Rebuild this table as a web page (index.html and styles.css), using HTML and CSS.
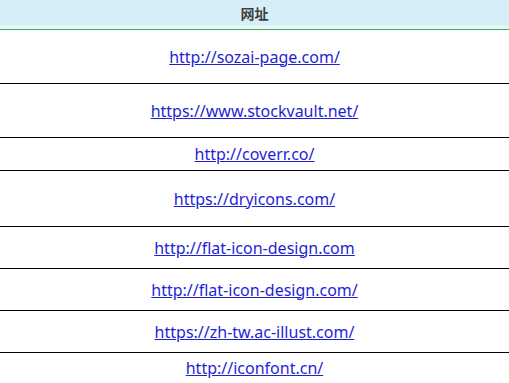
FILE: index.html
```html
<!DOCTYPE html>
<html lang="zh">
<head>
<meta charset="utf-8">
<title>网址</title>
<link rel="stylesheet" href="styles.css">
</head>
<body>
<table class="links">
  <thead>
    <tr><th class="head">网址</th></tr>
  </thead>
  <tbody>
    <tr class="r-tall"><td><a href="#">http://sozai-page.com/</a></td></tr>
    <tr class="r-tall"><td><a href="#">https://www.stockvault.net/</a></td></tr>
    <tr class="r-short"><td><a href="#">http://coverr.co/</a></td></tr>
    <tr class="r-xtall"><td><a href="#">https://dryicons.com/</a></td></tr>
    <tr class="r-mid"><td><a href="#">http://flat-icon-design.com</a></td></tr>
    <tr class="r-mid"><td><a href="#">http://flat-icon-design.com/</a></td></tr>
    <tr class="r-mid"><td><a href="#">https://zh-tw.ac-illust.com/</a></td></tr>
    <tr class="r-last"><td><a href="#">http://iconfont.cn/</a></td></tr>
  </tbody>
</table>
</body>
</html>
```
FILE: styles.css
```css
html, body {
  margin: 0;
  padding: 0;
  background: #fff;
}
body {
  font-family: "Noto Sans", "Open Sans", "Noto Sans CJK SC", sans-serif;
}
.links {
  width: 100%;
  border-collapse: collapse;
}
.head {
  height: 26px;
  padding: 0 0 3px;
  background: linear-gradient(#d5eef7 0, #d5eef7 25px, #e6f4f2 25px, #e6f4f2 100%);
  color: #3e3e3e;
  font-family: "Noto Sans CJK SC", sans-serif;
  font-size: 14px;
  font-weight: bold;
  text-align: center;
  vertical-align: middle;
  border-bottom: 1px solid #3fa86c;
}
td {
  padding: 0;
  text-align: center;
  font-size: 16px;
  border-bottom: 1px solid #000;
}
td a {
  color: #1f1fd6;
  text-decoration: underline;
}
.r-tall td { height: 53px; }
.r-short td { height: 32px; }
.r-xtall td { height: 55px; }
.r-mid td { height: 41px; }
.r-last td { height: 30px; border-bottom: none; }
```
